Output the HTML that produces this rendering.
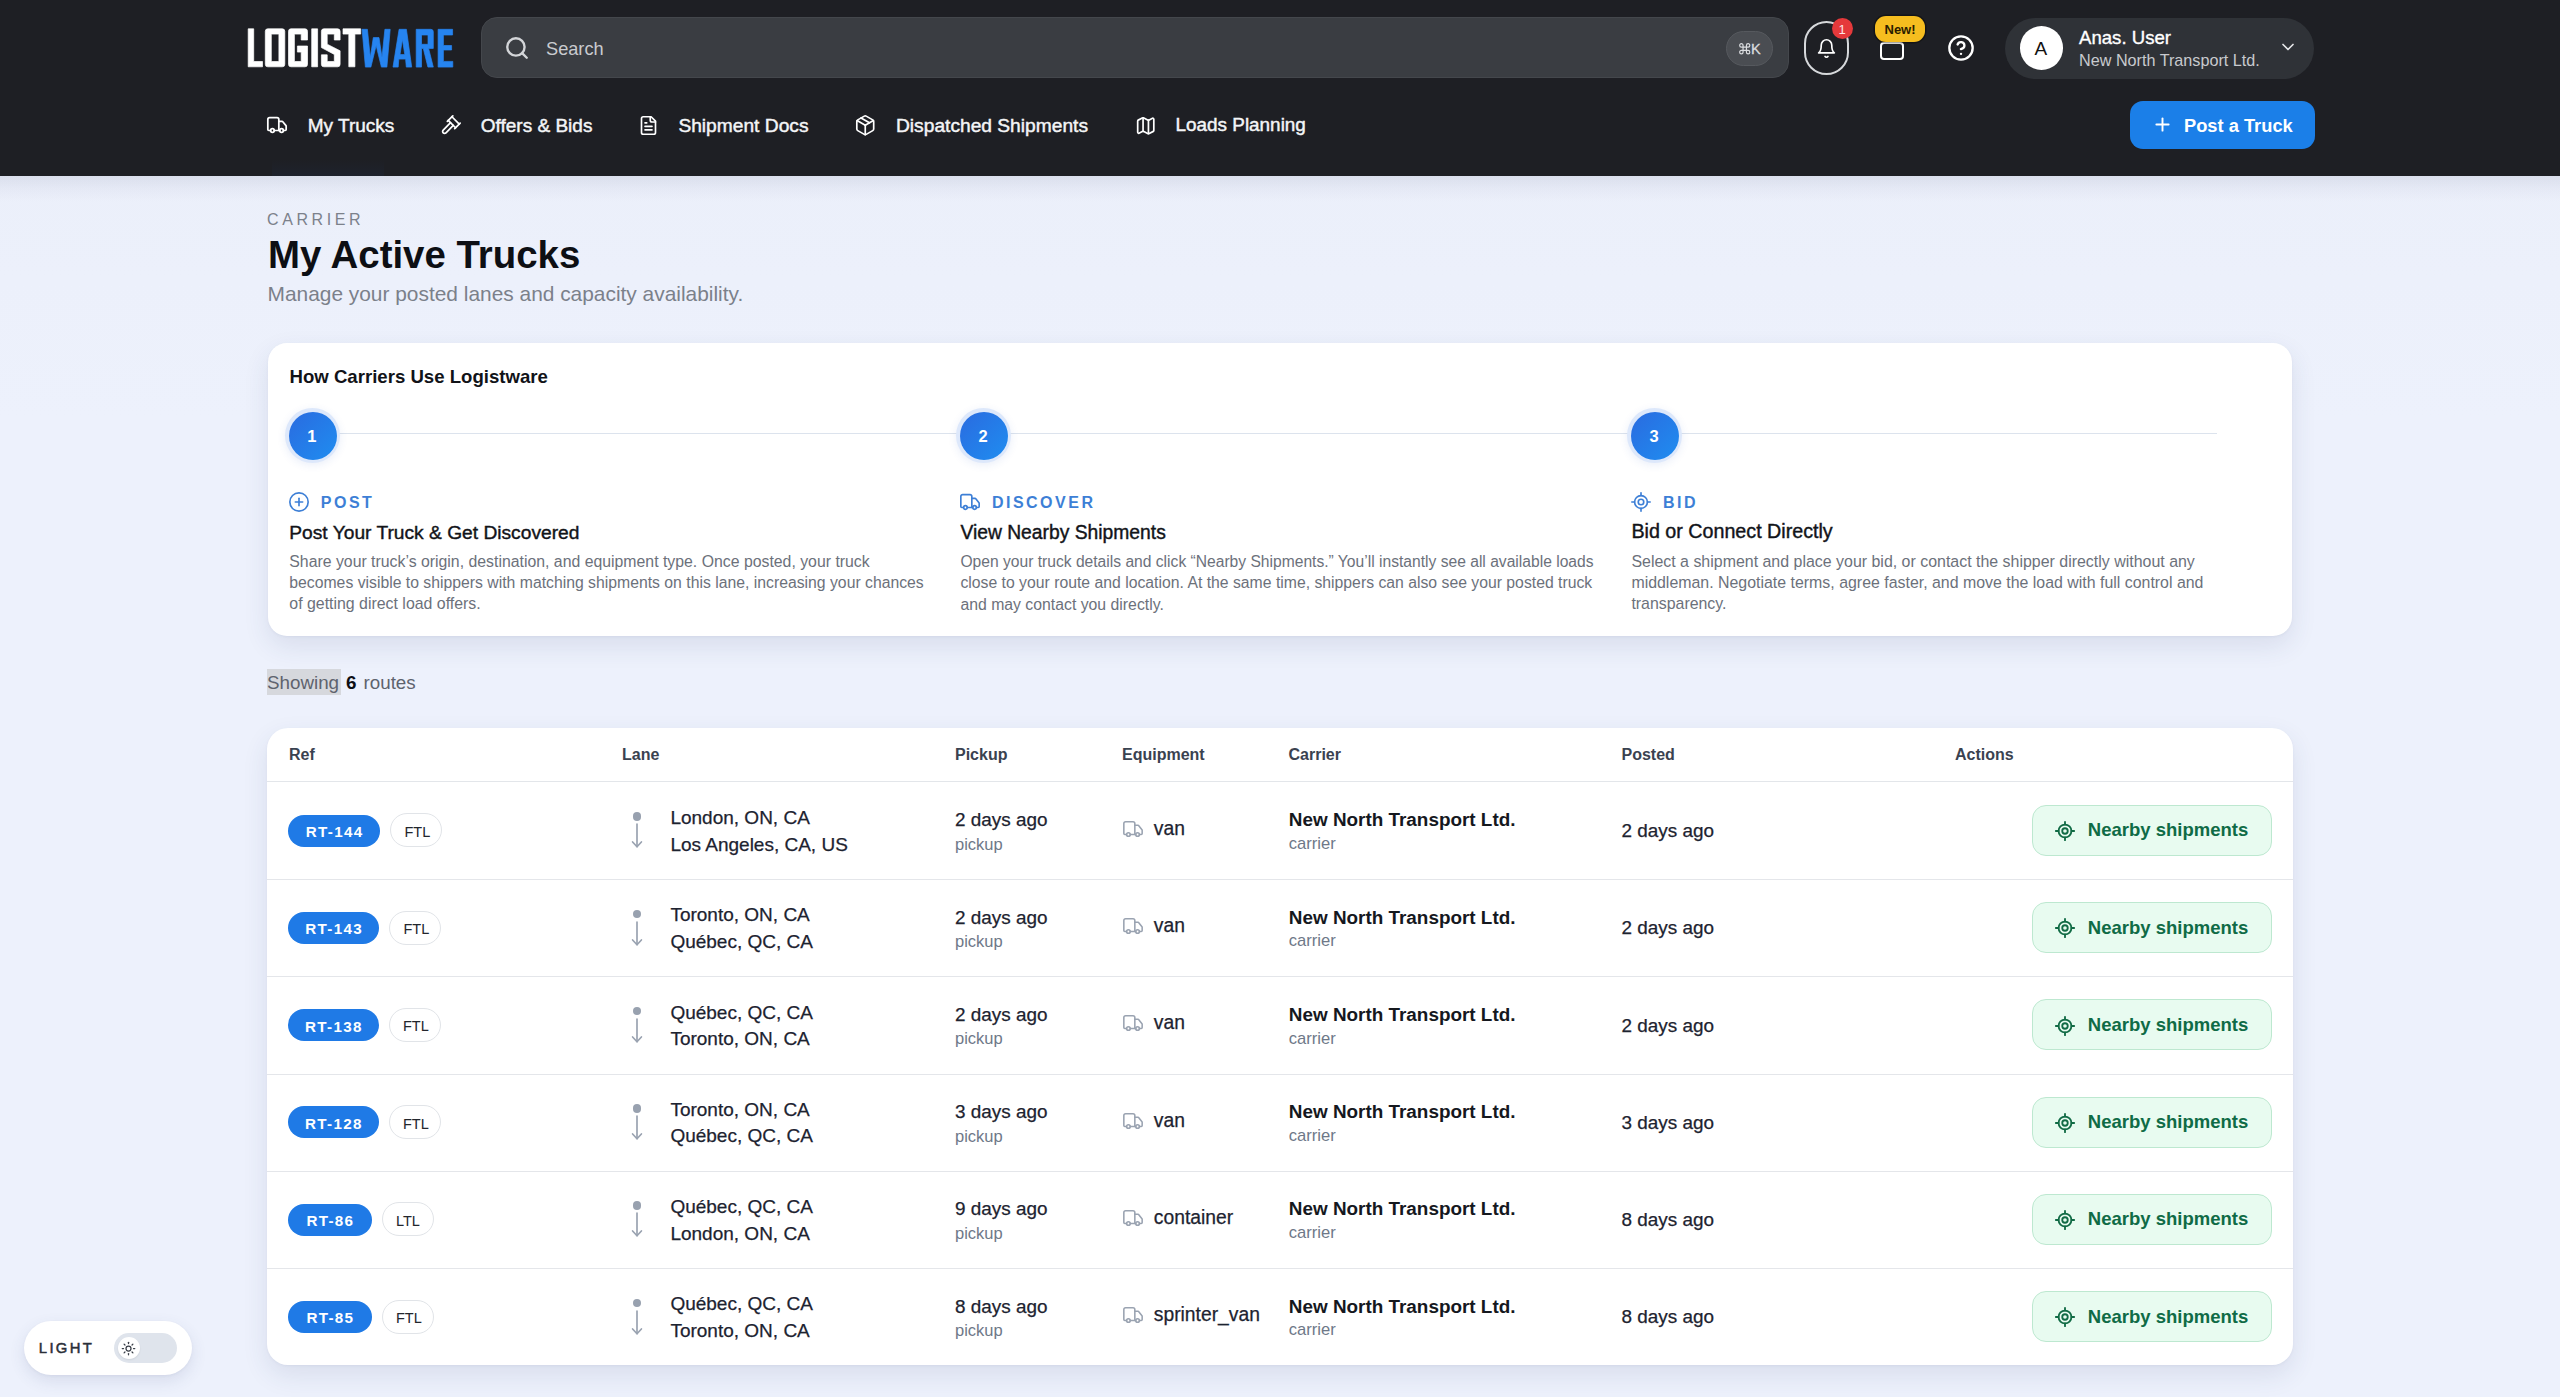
<!DOCTYPE html>
<html><head><meta charset="utf-8"><title>Logistware - My Active Trucks</title>
<style>
html,body{margin:0;padding:0;}
body{width:2560px;height:1397px;overflow:hidden;position:relative;background:#edf1fc;font-family:'Liberation Sans', sans-serif;}
.t{position:absolute;white-space:nowrap;font-family:'Liberation Sans', sans-serif;}
svg{display:block}
</style></head><body>

<div style="position:absolute;left:0.0px;top:0.0px;width:2560.0px;height:1397.0px;background:linear-gradient(180deg,#eaeef9 0%,#edf1fc 30%,#edf1fc 100%);"></div>
<div style="position:absolute;left:0.0px;top:0.0px;width:2560.0px;height:176.0px;background:#1e1f24;"></div>
<div style="position:absolute;left:0.0px;top:176.0px;width:2560.0px;height:26.0px;background:linear-gradient(180deg,rgba(40,50,90,0.085),rgba(40,50,90,0.03) 50%,rgba(40,50,90,0));"></div>
<svg style="position:absolute;left:0;top:0" width="470" height="80" viewBox="0 0 470 80">
<g fill="#ffffff" stroke="#ffffff" stroke-width="0.7" stroke-linejoin="round" fill-rule="evenodd">
<path d="M248.2 28.8H253.7V61.5H262.5V66.8H248.2Z"/>
<path d="M267.8 28.8H282.3Q284.8 28.8 284.8 31.3V64.3Q284.8 66.8 282.3 66.8H267.8Q265.3 66.8 265.3 64.3V31.3Q265.3 28.8 267.8 28.8ZM271.3 34.1V61.5H278.9V34.1Z"/>
<path d="M291 28.8H305Q307.5 28.8 307.5 31.3V40H301.2V34.1H294.4V61.5H301.2V52.1H297.4V46H307.5V64.3Q307.5 66.8 305 66.8H291Q288.5 66.8 288.5 64.3V31.3Q288.5 28.8 291 28.8Z"/>
<path d="M311.7 28.8H317.6V66.8H311.7Z"/>
<path d="M323.9 28.8H337.6Q340.1 28.8 340.1 31.3V40H334.3V34.1H327.2V44.2L340.1 50.8V64.3Q340.1 66.8 337.6 66.8H323.9Q321.4 66.8 321.4 64.3V54.8H327.2V61.5H334.3V54.4L321.4 47.6V31.3Q321.4 28.8 323.9 28.8Z"/>
<path d="M343 28.8H360.7V34.1H354.9V66.8H348.8V34.1H343Z"/>
</g>
<g fill="#2684f0" stroke="#2684f0" stroke-width="0.7" stroke-linejoin="round" fill-rule="evenodd">
<path d="M362.1 29.3H367.4L370.3 57.5L373.3 37.6H379L382 57.5L384.9 29.3H390.2L386.9 67.1H381.4L376.15 45.5L370.9 67.1H365.4Z"/>
<path d="M393 67.1L399.1 29.3H406.4L411.7 67.1H406.3L405.6 59.1H398.8L398.2 67.1ZM400 54.6H404.8L402.4 39.4Z"/>
<path d="M416.2 29.3H430.8Q433.3 29.3 433.3 31.8V48.4H428.6L433.3 67.1H427.9L423.3 48.4H421.5V67.1H416.2ZM421.5 35V44.3H428V35Z"/>
<path d="M438.1 29.3H452.6V35H443.4V45.5H451.6V50H443.4V61.4H452.8V67.1H438.1Z"/>
</g>
</svg>
<div style="position:absolute;left:481.0px;top:17.0px;width:1308.0px;height:61.0px;box-sizing:border-box;background:#3a3d42;border:1px solid #44474c;border-radius:16px;"></div>
<svg style="position:absolute;left:504.0px;top:35.0px;" width="26" height="26" viewBox="0 0 24 24" fill="none" stroke="#d3d5d8" stroke-width="2.2" stroke-linecap="round" stroke-linejoin="round"><circle cx="11" cy="11" r="8"/><path d="m21 21-4.3-4.3"/></svg>
<div class="t " style="left:546.0px;top:39.7px;font-size:18.2px;line-height:18.2px;color:#c9cbcf;">Search</div>
<div style="position:absolute;left:1726.0px;top:30.5px;width:47.0px;height:35.0px;box-sizing:border-box;background:#4a4d52;border:1px solid #56595e;border-radius:18px;"></div>
<svg style="position:absolute;left:1737.5px;top:41.6px;" width="13.5" height="13.5" viewBox="0 0 24 24" fill="none" stroke="#dadcdf" stroke-width="2.1" stroke-linecap="round" stroke-linejoin="round"><path d="M15 6v12a3 3 0 1 0 3-3H6a3 3 0 1 0 3 3V6a3 3 0 1 0-3 3h12a3 3 0 1 0-3-3"/></svg>
<div class="t " style="left:1751.0px;top:41.9px;font-size:14.5px;line-height:14.5px;color:#dadcdf;-webkit-text-stroke:0.3px #dadcdf;">K</div>
<div style="position:absolute;left:1804.0px;top:21.0px;width:45.0px;height:54.0px;box-sizing:border-box;border:2px solid #d6d8db;border-radius:23px;"></div>
<svg style="position:absolute;left:1816.2px;top:38.0px;" width="21" height="21" viewBox="0 0 24 24" fill="none" stroke="#ffffff" stroke-width="1.9" stroke-linecap="round" stroke-linejoin="round"><path d="M6 8a6 6 0 0 1 12 0c0 7 3 9 3 9H3s3-2 3-9"/><path d="M10.3 21a1.94 1.94 0 0 0 3.4 0"/></svg>
<div style="position:absolute;left:1832.0px;top:18.0px;width:21.0px;height:21.0px;background:#e5393b;border-radius:50%;"></div>
<div class="t " style="left:1838.5px;top:23.0px;font-size:13px;line-height:13px;color:#ffe6e6;">1</div>
<div style="position:absolute;left:1880.0px;top:42.0px;width:24.0px;height:18.0px;box-sizing:border-box;border:2.4px solid #fff;border-radius:4px;"></div>
<div style="position:absolute;left:1875.0px;top:16.0px;width:50.0px;height:25.5px;background:#f6bd1f;border-radius:11px;box-shadow:0 0 0 1.5px rgba(0,0,0,0.35);"></div>
<div class="t " style="left:1884.5px;top:22.5px;font-size:13px;line-height:13px;color:#2a1c00;font-weight:700;">New!</div>
<svg style="position:absolute;left:1947.0px;top:34.0px;" width="28" height="28" viewBox="0 0 24 24" fill="none" stroke="#ffffff" stroke-width="2" stroke-linecap="round" stroke-linejoin="round"><circle cx="12" cy="12" r="10"/><path d="M9.09 9a3 3 0 0 1 5.83 1c0 2-3 3-3 3"/><path d="M12 17h.01"/></svg>
<div style="position:absolute;left:2004.5px;top:18.0px;width:309.5px;height:60.5px;background:#2f3237;border-radius:31px;"></div>
<div style="position:absolute;left:2020.0px;top:26.0px;width:43.0px;height:43.5px;background:#ffffff;border-radius:50%;"></div>
<div class="t " style="left:2034.5px;top:39.1px;font-size:19px;line-height:19px;color:#111;">A</div>
<div class="t " style="left:2079.0px;top:29.4px;font-size:18.6px;line-height:18.6px;color:#ffffff;-webkit-text-stroke:0.35px #fff;">Anas. User</div>
<div class="t " style="left:2079.0px;top:52.3px;font-size:16.2px;line-height:16.2px;color:#c8cace;">New North Transport Ltd.</div>
<svg style="position:absolute;left:2278.0px;top:37.0px;" width="20" height="20" viewBox="0 0 24 24" fill="none" stroke="#e6e7e9" stroke-width="2" stroke-linecap="round" stroke-linejoin="round"><path d="m6 9 6 6 6-6"/></svg>
<svg style="position:absolute;left:266.2px;top:114.0px;" width="22" height="22" viewBox="0 0 24 24" fill="none" stroke="#fff" stroke-width="1.9" stroke-linecap="round" stroke-linejoin="round"><path d="M14 18V6a2 2 0 0 0-2-2H4a2 2 0 0 0-2 2v11a1 1 0 0 0 1 1h2"/><path d="M15 18H9"/><path d="M19 18h2a1 1 0 0 0 1-1v-3.65a1 1 0 0 0-.22-.624l-3.48-4.35A1 1 0 0 0 17.52 8H14"/><circle cx="17" cy="18" r="2"/><circle cx="7" cy="18" r="2"/></svg>
<div class="t " style="left:307.8px;top:116.2px;font-size:19px;line-height:19px;color:#f4f5f7;-webkit-text-stroke:0.45px #f4f5f7;">My Trucks</div>
<svg style="position:absolute;left:440.1px;top:114.0px;" width="22" height="22" viewBox="0 0 24 24" fill="none" stroke="#fff" stroke-width="1.9" stroke-linecap="round" stroke-linejoin="round"><path d="m14.5 12.5-8 8a2.119 2.119 0 1 1-3-3l8-8"/><path d="m16 16 6-6"/><path d="m8 8 6-6"/><path d="m9 7 8 8"/><path d="m21 11-8-8"/></svg>
<div class="t " style="left:480.8px;top:116.2px;font-size:19px;line-height:19px;color:#f4f5f7;-webkit-text-stroke:0.45px #f4f5f7;">Offers &amp; Bids</div>
<svg style="position:absolute;left:638.3px;top:114.8px;" width="21" height="21" viewBox="0 0 24 24" fill="none" stroke="#fff" stroke-width="1.9" stroke-linecap="round" stroke-linejoin="round"><path d="M15 2H6a2 2 0 0 0-2 2v16a2 2 0 0 0 2 2h12a2 2 0 0 0 2-2V7Z"/><path d="M14 2v4a2 2 0 0 0 2 2h4"/><path d="M10 9H8"/><path d="M16 13H8"/><path d="M16 17H8"/></svg>
<div class="t " style="left:678.4px;top:116.1px;font-size:19.2px;line-height:19.2px;color:#f4f5f7;-webkit-text-stroke:0.45px #f4f5f7;">Shipment Docs</div>
<svg style="position:absolute;left:854.1px;top:114.0px;" width="22.5" height="22.5" viewBox="0 0 24 24" fill="none" stroke="#fff" stroke-width="1.8" stroke-linecap="round" stroke-linejoin="round"><path d="m7.5 4.27 9 5.15"/><path d="M21 8a2 2 0 0 0-1-1.730l-7-4a2 2 0 0 0-2 0l-7 4A2 2 0 0 0 3 8v8a2 2 0 0 0 1 1.73l7 4a2 2 0 0 0 2 0l7-4A2 2 0 0 0 21 16Z"/><path d="m3.3 7 8.7 5 8.7-5"/><path d="M12 22V12"/></svg>
<div class="t " style="left:896.0px;top:116.1px;font-size:19.2px;line-height:19.2px;color:#f4f5f7;-webkit-text-stroke:0.45px #f4f5f7;">Dispatched Shipments</div>
<svg style="position:absolute;left:1134.5px;top:114.5px;" width="21.5" height="21.5" viewBox="0 0 24 24" fill="none" stroke="#fff" stroke-width="1.9" stroke-linecap="round" stroke-linejoin="round"><path d="M14.106 5.553a2 2 0 0 0 1.788 0l3.659-1.830A1 1 0 0 1 21 4.619v12.764a1 1 0 0 1-.553.894l-4.553 2.277a2 2 0 0 1-1.788 0l-4.212-2.106a2 2 0 0 0-1.788 0l-3.659 1.830A1 1 0 0 1 3 19.381V6.618a1 1 0 0 1 .553-.894l4.553-2.277a2 2 0 0 1 1.788 0z"/><path d="M15 5.764v15"/><path d="M9 3.236v15"/></svg>
<div class="t " style="left:1175.6px;top:116.3px;font-size:18.9px;line-height:18.9px;color:#f4f5f7;-webkit-text-stroke:0.45px #f4f5f7;">Loads Planning</div>
<div style="position:absolute;left:272.0px;top:159.0px;width:112.0px;height:17.0px;background:linear-gradient(180deg,rgba(30,60,120,0),rgba(30,60,120,0.10));"></div>
<div style="position:absolute;left:2130.0px;top:101.0px;width:185.0px;height:48.0px;background:#1b7fe8;border-radius:13px;"></div>
<svg style="position:absolute;left:2151.5px;top:113.5px;" width="21" height="21" viewBox="0 0 24 24" fill="none" stroke="#fff" stroke-width="2.2" stroke-linecap="round" stroke-linejoin="round"><path d="M5 12h14"/><path d="M12 5v14"/></svg>
<div class="t " style="left:2184.0px;top:116.8px;font-size:18.3px;line-height:18.3px;color:#ffffff;font-weight:700;">Post a Truck</div>
<div class="t " style="left:267.0px;top:211.7px;font-size:16px;line-height:16px;color:#7c818b;letter-spacing:3.6px;">CARRIER</div>
<div class="t " style="left:268.0px;top:236.4px;font-size:38.4px;line-height:38.4px;color:#0d0f14;font-weight:700;">My Active Trucks</div>
<div class="t " style="left:267.5px;top:283.5px;font-size:20.9px;line-height:20.9px;color:#7b808a;">Manage your posted lanes and capacity availability.</div>
<div style="position:absolute;left:268.0px;top:342.5px;width:2024.0px;height:293.5px;background:#ffffff;border-radius:19px;box-shadow:0 10px 26px rgba(50,60,110,0.11),0 1px 3px rgba(50,60,110,0.05);"></div>
<div class="t " style="left:289.5px;top:368.3px;font-size:18.6px;line-height:18.6px;color:#111318;font-weight:700;">How Carriers Use Logistware</div>
<div style="position:absolute;left:337.0px;top:432.8px;width:1880.0px;height:1.6px;background:#dce3ed;"></div>
<div style="position:absolute;left:285.3px;top:408.1px;width:55.0px;height:55.0px;background:#dde8fb;border-radius:50%;box-shadow:0 2px 8px rgba(40,90,200,0.10);"></div>
<div style="position:absolute;left:288.8px;top:411.6px;width:48.0px;height:48.0px;background:linear-gradient(135deg,#2a6be0 0%,#1f8df0 100%);border-radius:50%;"></div>
<div class="t " style="left:307.3px;top:428.0px;font-size:16.5px;line-height:16.5px;color:#ffffff;font-weight:700;">1</div>
<div style="position:absolute;left:956.4px;top:408.1px;width:55.0px;height:55.0px;background:#dde8fb;border-radius:50%;box-shadow:0 2px 8px rgba(40,90,200,0.10);"></div>
<div style="position:absolute;left:959.9px;top:411.6px;width:48.0px;height:48.0px;background:linear-gradient(135deg,#2a6be0 0%,#1f8df0 100%);border-radius:50%;"></div>
<div class="t " style="left:978.4px;top:428.0px;font-size:16.5px;line-height:16.5px;color:#ffffff;font-weight:700;">2</div>
<div style="position:absolute;left:1627.4px;top:408.1px;width:55.0px;height:55.0px;background:#dde8fb;border-radius:50%;box-shadow:0 2px 8px rgba(40,90,200,0.10);"></div>
<div style="position:absolute;left:1630.9px;top:411.6px;width:48.0px;height:48.0px;background:linear-gradient(135deg,#2a6be0 0%,#1f8df0 100%);border-radius:50%;"></div>
<div class="t " style="left:1649.4px;top:428.0px;font-size:16.5px;line-height:16.5px;color:#ffffff;font-weight:700;">3</div>
<svg style="position:absolute;left:287.8px;top:490.5px;" width="22" height="22" viewBox="0 0 24 24" fill="none" stroke="#3d7fd6" stroke-width="1.8" stroke-linecap="round" stroke-linejoin="round"><circle cx="12" cy="12" r="10"/><path d="M8 12h8"/><path d="M12 8v8"/></svg>
<div class="t " style="left:320.8px;top:495.2px;font-size:16px;line-height:16px;color:#3d7fd6;font-weight:700;letter-spacing:2.5px;">POST</div>
<div class="t " style="left:289.3px;top:522.8px;font-size:19.2px;line-height:19.2px;color:#121419;-webkit-text-stroke:0.4px #121419;">Post Your Truck &amp; Get Discovered</div>
<div class="t " style="left:289.3px;top:553.8px;font-size:15.83px;line-height:15.83px;color:#6c717b;">Share your truck’s origin, destination, and equipment type. Once posted, your truck</div>
<div class="t " style="left:289.3px;top:575.2px;font-size:15.78px;line-height:15.78px;color:#6c717b;">becomes visible to shippers with matching shipments on this lane, increasing your chances</div>
<div class="t " style="left:289.3px;top:596.4px;font-size:15.9px;line-height:15.9px;color:#6c717b;">of getting direct load offers.</div>
<svg style="position:absolute;left:958.9px;top:490.5px;" width="22" height="22" viewBox="0 0 24 24" fill="none" stroke="#3d7fd6" stroke-width="1.8" stroke-linecap="round" stroke-linejoin="round"><path d="M14 18V6a2 2 0 0 0-2-2H4a2 2 0 0 0-2 2v11a1 1 0 0 0 1 1h2"/><path d="M15 18H9"/><path d="M19 18h2a1 1 0 0 0 1-1v-3.65a1 1 0 0 0-.22-.624l-3.48-4.35A1 1 0 0 0 17.52 8H14"/><circle cx="17" cy="18" r="2"/><circle cx="7" cy="18" r="2"/></svg>
<div class="t " style="left:991.9px;top:495.2px;font-size:16px;line-height:16px;color:#3d7fd6;font-weight:700;letter-spacing:2.5px;">DISCOVER</div>
<div class="t " style="left:960.4px;top:522.7px;font-size:19.3px;line-height:19.3px;color:#121419;-webkit-text-stroke:0.4px #121419;">View Nearby Shipments</div>
<div class="t " style="left:960.4px;top:554.0px;font-size:15.64px;line-height:15.64px;color:#6c717b;">Open your truck details and click “Nearby Shipments.” You’ll instantly see all available loads</div>
<div class="t " style="left:960.4px;top:575.2px;font-size:15.77px;line-height:15.77px;color:#6c717b;">close to your route and location. At the same time, shippers can also see your posted truck</div>
<div class="t " style="left:960.4px;top:596.5px;font-size:15.8px;line-height:15.8px;color:#6c717b;">and may contact you directly.</div>
<svg style="position:absolute;left:1629.9px;top:490.5px;" width="22" height="22" viewBox="0 0 24 24" fill="none" stroke="#3d7fd6" stroke-width="1.8" stroke-linecap="round" stroke-linejoin="round"><line x1="2" x2="5" y1="12" y2="12"/><line x1="19" x2="22" y1="12" y2="12"/><line x1="12" x2="12" y1="2" y2="5"/><line x1="12" x2="12" y1="19" y2="22"/><circle cx="12" cy="12" r="7"/><circle cx="12" cy="12" r="3"/></svg>
<div class="t " style="left:1662.9px;top:495.2px;font-size:16px;line-height:16px;color:#3d7fd6;font-weight:700;letter-spacing:2.5px;">BID</div>
<div class="t " style="left:1631.4px;top:522.4px;font-size:19.7px;line-height:19.7px;color:#121419;-webkit-text-stroke:0.4px #121419;">Bid or Connect Directly</div>
<div class="t " style="left:1631.4px;top:553.8px;font-size:15.94px;line-height:15.94px;color:#6c717b;">Select a shipment and place your bid, or contact the shipper directly without any</div>
<div class="t " style="left:1631.4px;top:575.1px;font-size:15.91px;line-height:15.91px;color:#6c717b;">middleman. Negotiate terms, agree faster, and move the load with full control and</div>
<div class="t " style="left:1631.4px;top:596.4px;font-size:15.9px;line-height:15.9px;color:#6c717b;">transparency.</div>
<div style="position:absolute;left:266.5px;top:669.3px;width:74.5px;height:26.0px;background:#d6d8dd;"></div>
<div class="t " style="left:267.0px;top:673.7px;font-size:18.8px;line-height:18.8px;color:#5e636e;">Showing</div>
<div class="t " style="left:346.0px;top:673.7px;font-size:18.8px;line-height:18.8px;color:#0d0f14;font-weight:700;">6</div>
<div class="t " style="left:363.5px;top:673.7px;font-size:18.8px;line-height:18.8px;color:#5e636e;">routes</div>
<div style="position:absolute;left:266.5px;top:728.0px;width:2026.5px;height:637.0px;background:#ffffff;border-radius:21px;box-shadow:0 10px 26px rgba(50,60,110,0.11),0 1px 3px rgba(50,60,110,0.05);"></div>
<div class="t " style="left:289.0px;top:746.7px;font-size:16px;line-height:16px;color:#3a4250;font-weight:700;">Ref</div>
<div class="t " style="left:622.0px;top:746.7px;font-size:16px;line-height:16px;color:#3a4250;font-weight:700;">Lane</div>
<div class="t " style="left:955.0px;top:746.7px;font-size:16px;line-height:16px;color:#3a4250;font-weight:700;">Pickup</div>
<div class="t " style="left:1122.0px;top:746.7px;font-size:16px;line-height:16px;color:#3a4250;font-weight:700;">Equipment</div>
<div class="t " style="left:1288.5px;top:746.7px;font-size:16px;line-height:16px;color:#3a4250;font-weight:700;">Carrier</div>
<div class="t " style="left:1621.5px;top:746.7px;font-size:16px;line-height:16px;color:#3a4250;font-weight:700;">Posted</div>
<div class="t " style="left:1955.0px;top:746.7px;font-size:16px;line-height:16px;color:#3a4250;font-weight:700;">Actions</div>
<div style="position:absolute;left:266.5px;top:781.0px;width:2026.5px;height:1.3px;background:#e3e6ea;"></div>
<div style="position:absolute;left:288.0px;top:814.6px;width:92.0px;height:32.0px;background:#1f7ae6;border-radius:16px;"></div>
<div class="t" style="left:288px;width:92px;text-align:center;top:824.1px;font-size:15.2px;line-height:15.2px;color:#fff;font-weight:700;letter-spacing:1.3px;text-indent:1.3px">RT-144</div>
<div style="position:absolute;left:390.0px;top:813.4px;width:52.0px;height:34.0px;box-sizing:border-box;background:#fff;border:1.2px solid #e1e4e8;border-radius:17px;"></div>
<div class="t " style="left:404.5px;top:824.9px;font-size:14.5px;line-height:14.5px;color:#23262d;">FTL</div>
<div style="position:absolute;left:632.9px;top:812.4px;width:8.6px;height:8.6px;background:#98a1af;border-radius:50%;"></div>
<svg style="position:absolute;left:630.2px;top:823.4px;" width="14" height="26" viewBox="0 0 14 26" fill="none" stroke="#9aa3b1" stroke-width="1.7" stroke-linecap="round" stroke-linejoin="round"><path d="M7 1v22.5"/><path d="m2.6 19 4.4 4.8 4.4-4.8"/></svg>
<div class="t " style="left:670.4px;top:808.1px;font-size:19px;line-height:19px;color:#1d2330;-webkit-text-stroke:0.25px #1d2330;">London, ON, CA</div>
<div class="t " style="left:670.4px;top:834.5px;font-size:19px;line-height:19px;color:#1d2330;-webkit-text-stroke:0.25px #1d2330;">Los Angeles, CA, US</div>
<div class="t " style="left:955.0px;top:811.2px;font-size:18.9px;line-height:18.9px;color:#1d2330;-webkit-text-stroke:0.25px #1d2330;">2 days ago</div>
<div class="t " style="left:955.0px;top:835.9px;font-size:16.5px;line-height:16.5px;color:#6e7888;">pickup</div>
<svg style="position:absolute;left:1121.5px;top:817.9px;" width="22" height="22" viewBox="0 0 24 24" fill="none" stroke="#9aa3b1" stroke-width="1.7" stroke-linecap="round" stroke-linejoin="round"><path d="M14 18V6a2 2 0 0 0-2-2H4a2 2 0 0 0-2 2v11a1 1 0 0 0 1 1h2"/><path d="M15 18H9"/><path d="M19 18h2a1 1 0 0 0 1-1v-3.65a1 1 0 0 0-.22-.624l-3.48-4.35A1 1 0 0 0 17.52 8H14"/><circle cx="17" cy="18" r="2"/><circle cx="7" cy="18" r="2"/></svg>
<div class="t " style="left:1153.8px;top:818.8px;font-size:19.3px;line-height:19.3px;color:#1d2330;-webkit-text-stroke:0.25px #1d2330;">van</div>
<div class="t " style="left:1288.8px;top:811.2px;font-size:18.9px;line-height:18.9px;color:#15181e;font-weight:700;">New North Transport Ltd.</div>
<div class="t " style="left:1288.8px;top:836.2px;font-size:16.6px;line-height:16.6px;color:#6e7888;">carrier</div>
<div class="t " style="left:1621.5px;top:822.1px;font-size:18.9px;line-height:18.9px;color:#1d2330;-webkit-text-stroke:0.25px #1d2330;">2 days ago</div>
<div style="position:absolute;left:2032.0px;top:804.8px;width:240.0px;height:51.0px;box-sizing:border-box;background:#e8fbf0;border:1.3px solid #bde8d0;border-radius:14px;"></div>
<svg style="position:absolute;left:2054.0px;top:820.0px;" width="22" height="22" viewBox="0 0 24 24" fill="none" stroke="#116b45" stroke-width="2" stroke-linecap="round" stroke-linejoin="round"><line x1="2" x2="5" y1="12" y2="12"/><line x1="19" x2="22" y1="12" y2="12"/><line x1="12" x2="12" y1="2" y2="5"/><line x1="12" x2="12" y1="19" y2="22"/><circle cx="12" cy="12" r="7"/><circle cx="12" cy="12" r="3"/></svg>
<div class="t " style="left:2087.8px;top:821.4px;font-size:18.5px;line-height:18.5px;color:#0f6b46;font-weight:700;">Nearby shipments</div>
<div style="position:absolute;left:266.5px;top:879.0px;width:2026.5px;height:1.1px;background:#e4e6ea;"></div>
<div style="position:absolute;left:288.0px;top:911.9px;width:91.0px;height:32.0px;background:#1f7ae6;border-radius:16px;"></div>
<div class="t" style="left:288px;width:91px;text-align:center;top:921.3px;font-size:15.2px;line-height:15.2px;color:#fff;font-weight:700;letter-spacing:1.3px;text-indent:1.3px">RT-143</div>
<div style="position:absolute;left:389.0px;top:910.6px;width:52.0px;height:34.0px;box-sizing:border-box;background:#fff;border:1.2px solid #e1e4e8;border-radius:17px;"></div>
<div class="t " style="left:403.5px;top:922.1px;font-size:14.5px;line-height:14.5px;color:#23262d;">FTL</div>
<div style="position:absolute;left:632.9px;top:909.6px;width:8.6px;height:8.6px;background:#98a1af;border-radius:50%;"></div>
<svg style="position:absolute;left:630.2px;top:920.6px;" width="14" height="26" viewBox="0 0 14 26" fill="none" stroke="#9aa3b1" stroke-width="1.7" stroke-linecap="round" stroke-linejoin="round"><path d="M7 1v22.5"/><path d="m2.6 19 4.4 4.8 4.4-4.8"/></svg>
<div class="t " style="left:670.4px;top:905.4px;font-size:19px;line-height:19px;color:#1d2330;-webkit-text-stroke:0.25px #1d2330;">Toronto, ON, CA</div>
<div class="t " style="left:670.4px;top:931.8px;font-size:19px;line-height:19px;color:#1d2330;-webkit-text-stroke:0.25px #1d2330;">Québec, QC, CA</div>
<div class="t " style="left:955.0px;top:908.5px;font-size:18.9px;line-height:18.9px;color:#1d2330;-webkit-text-stroke:0.25px #1d2330;">2 days ago</div>
<div class="t " style="left:955.0px;top:933.1px;font-size:16.5px;line-height:16.5px;color:#6e7888;">pickup</div>
<svg style="position:absolute;left:1121.5px;top:915.1px;" width="22" height="22" viewBox="0 0 24 24" fill="none" stroke="#9aa3b1" stroke-width="1.7" stroke-linecap="round" stroke-linejoin="round"><path d="M14 18V6a2 2 0 0 0-2-2H4a2 2 0 0 0-2 2v11a1 1 0 0 0 1 1h2"/><path d="M15 18H9"/><path d="M19 18h2a1 1 0 0 0 1-1v-3.65a1 1 0 0 0-.22-.624l-3.48-4.35A1 1 0 0 0 17.52 8H14"/><circle cx="17" cy="18" r="2"/><circle cx="7" cy="18" r="2"/></svg>
<div class="t " style="left:1153.8px;top:916.0px;font-size:19.3px;line-height:19.3px;color:#1d2330;-webkit-text-stroke:0.25px #1d2330;">van</div>
<div class="t " style="left:1288.8px;top:908.5px;font-size:18.9px;line-height:18.9px;color:#15181e;font-weight:700;">New North Transport Ltd.</div>
<div class="t " style="left:1288.8px;top:933.4px;font-size:16.6px;line-height:16.6px;color:#6e7888;">carrier</div>
<div class="t " style="left:1621.5px;top:919.4px;font-size:18.9px;line-height:18.9px;color:#1d2330;-webkit-text-stroke:0.25px #1d2330;">2 days ago</div>
<div style="position:absolute;left:2032.0px;top:902.0px;width:240.0px;height:51.0px;box-sizing:border-box;background:#e8fbf0;border:1.3px solid #bde8d0;border-radius:14px;"></div>
<svg style="position:absolute;left:2054.0px;top:917.2px;" width="22" height="22" viewBox="0 0 24 24" fill="none" stroke="#116b45" stroke-width="2" stroke-linecap="round" stroke-linejoin="round"><line x1="2" x2="5" y1="12" y2="12"/><line x1="19" x2="22" y1="12" y2="12"/><line x1="12" x2="12" y1="2" y2="5"/><line x1="12" x2="12" y1="19" y2="22"/><circle cx="12" cy="12" r="7"/><circle cx="12" cy="12" r="3"/></svg>
<div class="t " style="left:2087.8px;top:918.6px;font-size:18.5px;line-height:18.5px;color:#0f6b46;font-weight:700;">Nearby shipments</div>
<div style="position:absolute;left:266.5px;top:976.2px;width:2026.5px;height:1.1px;background:#e4e6ea;"></div>
<div style="position:absolute;left:288.0px;top:1009.1px;width:90.5px;height:32.0px;background:#1f7ae6;border-radius:16px;"></div>
<div class="t" style="left:288px;width:90.5px;text-align:center;top:1018.6px;font-size:15.2px;line-height:15.2px;color:#fff;font-weight:700;letter-spacing:1.3px;text-indent:1.3px">RT-138</div>
<div style="position:absolute;left:388.5px;top:1007.9px;width:52.0px;height:34.0px;box-sizing:border-box;background:#fff;border:1.2px solid #e1e4e8;border-radius:17px;"></div>
<div class="t " style="left:403.0px;top:1019.4px;font-size:14.5px;line-height:14.5px;color:#23262d;">FTL</div>
<div style="position:absolute;left:632.9px;top:1006.9px;width:8.6px;height:8.6px;background:#98a1af;border-radius:50%;"></div>
<svg style="position:absolute;left:630.2px;top:1017.9px;" width="14" height="26" viewBox="0 0 14 26" fill="none" stroke="#9aa3b1" stroke-width="1.7" stroke-linecap="round" stroke-linejoin="round"><path d="M7 1v22.5"/><path d="m2.6 19 4.4 4.8 4.4-4.8"/></svg>
<div class="t " style="left:670.4px;top:1002.6px;font-size:19px;line-height:19px;color:#1d2330;-webkit-text-stroke:0.25px #1d2330;">Québec, QC, CA</div>
<div class="t " style="left:670.4px;top:1029.0px;font-size:19px;line-height:19px;color:#1d2330;-webkit-text-stroke:0.25px #1d2330;">Toronto, ON, CA</div>
<div class="t " style="left:955.0px;top:1005.7px;font-size:18.9px;line-height:18.9px;color:#1d2330;-webkit-text-stroke:0.25px #1d2330;">2 days ago</div>
<div class="t " style="left:955.0px;top:1030.4px;font-size:16.5px;line-height:16.5px;color:#6e7888;">pickup</div>
<svg style="position:absolute;left:1121.5px;top:1012.4px;" width="22" height="22" viewBox="0 0 24 24" fill="none" stroke="#9aa3b1" stroke-width="1.7" stroke-linecap="round" stroke-linejoin="round"><path d="M14 18V6a2 2 0 0 0-2-2H4a2 2 0 0 0-2 2v11a1 1 0 0 0 1 1h2"/><path d="M15 18H9"/><path d="M19 18h2a1 1 0 0 0 1-1v-3.65a1 1 0 0 0-.22-.624l-3.48-4.35A1 1 0 0 0 17.52 8H14"/><circle cx="17" cy="18" r="2"/><circle cx="7" cy="18" r="2"/></svg>
<div class="t " style="left:1153.8px;top:1013.3px;font-size:19.3px;line-height:19.3px;color:#1d2330;-webkit-text-stroke:0.25px #1d2330;">van</div>
<div class="t " style="left:1288.8px;top:1005.7px;font-size:18.9px;line-height:18.9px;color:#15181e;font-weight:700;">New North Transport Ltd.</div>
<div class="t " style="left:1288.8px;top:1030.7px;font-size:16.6px;line-height:16.6px;color:#6e7888;">carrier</div>
<div class="t " style="left:1621.5px;top:1016.6px;font-size:18.9px;line-height:18.9px;color:#1d2330;-webkit-text-stroke:0.25px #1d2330;">2 days ago</div>
<div style="position:absolute;left:2032.0px;top:999.3px;width:240.0px;height:51.0px;box-sizing:border-box;background:#e8fbf0;border:1.3px solid #bde8d0;border-radius:14px;"></div>
<svg style="position:absolute;left:2054.0px;top:1014.5px;" width="22" height="22" viewBox="0 0 24 24" fill="none" stroke="#116b45" stroke-width="2" stroke-linecap="round" stroke-linejoin="round"><line x1="2" x2="5" y1="12" y2="12"/><line x1="19" x2="22" y1="12" y2="12"/><line x1="12" x2="12" y1="2" y2="5"/><line x1="12" x2="12" y1="19" y2="22"/><circle cx="12" cy="12" r="7"/><circle cx="12" cy="12" r="3"/></svg>
<div class="t " style="left:2087.8px;top:1015.9px;font-size:18.5px;line-height:18.5px;color:#0f6b46;font-weight:700;">Nearby shipments</div>
<div style="position:absolute;left:266.5px;top:1073.5px;width:2026.5px;height:1.1px;background:#e4e6ea;"></div>
<div style="position:absolute;left:288.0px;top:1106.4px;width:90.5px;height:32.0px;background:#1f7ae6;border-radius:16px;"></div>
<div class="t" style="left:288px;width:90.5px;text-align:center;top:1115.8px;font-size:15.2px;line-height:15.2px;color:#fff;font-weight:700;letter-spacing:1.3px;text-indent:1.3px">RT-128</div>
<div style="position:absolute;left:388.5px;top:1105.2px;width:52.0px;height:34.0px;box-sizing:border-box;background:#fff;border:1.2px solid #e1e4e8;border-radius:17px;"></div>
<div class="t " style="left:403.0px;top:1116.6px;font-size:14.5px;line-height:14.5px;color:#23262d;">FTL</div>
<div style="position:absolute;left:632.9px;top:1104.2px;width:8.6px;height:8.6px;background:#98a1af;border-radius:50%;"></div>
<svg style="position:absolute;left:630.2px;top:1115.2px;" width="14" height="26" viewBox="0 0 14 26" fill="none" stroke="#9aa3b1" stroke-width="1.7" stroke-linecap="round" stroke-linejoin="round"><path d="M7 1v22.5"/><path d="m2.6 19 4.4 4.8 4.4-4.8"/></svg>
<div class="t " style="left:670.4px;top:1099.9px;font-size:19px;line-height:19px;color:#1d2330;-webkit-text-stroke:0.25px #1d2330;">Toronto, ON, CA</div>
<div class="t " style="left:670.4px;top:1126.3px;font-size:19px;line-height:19px;color:#1d2330;-webkit-text-stroke:0.25px #1d2330;">Québec, QC, CA</div>
<div class="t " style="left:955.0px;top:1103.0px;font-size:18.9px;line-height:18.9px;color:#1d2330;-webkit-text-stroke:0.25px #1d2330;">3 days ago</div>
<div class="t " style="left:955.0px;top:1127.6px;font-size:16.5px;line-height:16.5px;color:#6e7888;">pickup</div>
<svg style="position:absolute;left:1121.5px;top:1109.7px;" width="22" height="22" viewBox="0 0 24 24" fill="none" stroke="#9aa3b1" stroke-width="1.7" stroke-linecap="round" stroke-linejoin="round"><path d="M14 18V6a2 2 0 0 0-2-2H4a2 2 0 0 0-2 2v11a1 1 0 0 0 1 1h2"/><path d="M15 18H9"/><path d="M19 18h2a1 1 0 0 0 1-1v-3.65a1 1 0 0 0-.22-.624l-3.48-4.35A1 1 0 0 0 17.52 8H14"/><circle cx="17" cy="18" r="2"/><circle cx="7" cy="18" r="2"/></svg>
<div class="t " style="left:1153.8px;top:1110.5px;font-size:19.3px;line-height:19.3px;color:#1d2330;-webkit-text-stroke:0.25px #1d2330;">van</div>
<div class="t " style="left:1288.8px;top:1103.0px;font-size:18.9px;line-height:18.9px;color:#15181e;font-weight:700;">New North Transport Ltd.</div>
<div class="t " style="left:1288.8px;top:1127.9px;font-size:16.6px;line-height:16.6px;color:#6e7888;">carrier</div>
<div class="t " style="left:1621.5px;top:1113.9px;font-size:18.9px;line-height:18.9px;color:#1d2330;-webkit-text-stroke:0.25px #1d2330;">3 days ago</div>
<div style="position:absolute;left:2032.0px;top:1096.6px;width:240.0px;height:51.0px;box-sizing:border-box;background:#e8fbf0;border:1.3px solid #bde8d0;border-radius:14px;"></div>
<svg style="position:absolute;left:2054.0px;top:1111.8px;" width="22" height="22" viewBox="0 0 24 24" fill="none" stroke="#116b45" stroke-width="2" stroke-linecap="round" stroke-linejoin="round"><line x1="2" x2="5" y1="12" y2="12"/><line x1="19" x2="22" y1="12" y2="12"/><line x1="12" x2="12" y1="2" y2="5"/><line x1="12" x2="12" y1="19" y2="22"/><circle cx="12" cy="12" r="7"/><circle cx="12" cy="12" r="3"/></svg>
<div class="t " style="left:2087.8px;top:1113.1px;font-size:18.5px;line-height:18.5px;color:#0f6b46;font-weight:700;">Nearby shipments</div>
<div style="position:absolute;left:266.5px;top:1170.8px;width:2026.5px;height:1.1px;background:#e4e6ea;"></div>
<div style="position:absolute;left:288.0px;top:1203.6px;width:83.5px;height:32.0px;background:#1f7ae6;border-radius:16px;"></div>
<div class="t" style="left:288px;width:83.5px;text-align:center;top:1213.1px;font-size:15.2px;line-height:15.2px;color:#fff;font-weight:700;letter-spacing:1.3px;text-indent:1.3px">RT-86</div>
<div style="position:absolute;left:381.5px;top:1202.4px;width:52.0px;height:34.0px;box-sizing:border-box;background:#fff;border:1.2px solid #e1e4e8;border-radius:17px;"></div>
<div class="t " style="left:396.0px;top:1213.9px;font-size:14.5px;line-height:14.5px;color:#23262d;">LTL</div>
<div style="position:absolute;left:632.9px;top:1201.4px;width:8.6px;height:8.6px;background:#98a1af;border-radius:50%;"></div>
<svg style="position:absolute;left:630.2px;top:1212.4px;" width="14" height="26" viewBox="0 0 14 26" fill="none" stroke="#9aa3b1" stroke-width="1.7" stroke-linecap="round" stroke-linejoin="round"><path d="M7 1v22.5"/><path d="m2.6 19 4.4 4.8 4.4-4.8"/></svg>
<div class="t " style="left:670.4px;top:1197.2px;font-size:19px;line-height:19px;color:#1d2330;-webkit-text-stroke:0.25px #1d2330;">Québec, QC, CA</div>
<div class="t " style="left:670.4px;top:1223.5px;font-size:19px;line-height:19px;color:#1d2330;-webkit-text-stroke:0.25px #1d2330;">London, ON, CA</div>
<div class="t " style="left:955.0px;top:1200.2px;font-size:18.9px;line-height:18.9px;color:#1d2330;-webkit-text-stroke:0.25px #1d2330;">9 days ago</div>
<div class="t " style="left:955.0px;top:1224.9px;font-size:16.5px;line-height:16.5px;color:#6e7888;">pickup</div>
<svg style="position:absolute;left:1121.5px;top:1206.9px;" width="22" height="22" viewBox="0 0 24 24" fill="none" stroke="#9aa3b1" stroke-width="1.7" stroke-linecap="round" stroke-linejoin="round"><path d="M14 18V6a2 2 0 0 0-2-2H4a2 2 0 0 0-2 2v11a1 1 0 0 0 1 1h2"/><path d="M15 18H9"/><path d="M19 18h2a1 1 0 0 0 1-1v-3.65a1 1 0 0 0-.22-.624l-3.48-4.35A1 1 0 0 0 17.52 8H14"/><circle cx="17" cy="18" r="2"/><circle cx="7" cy="18" r="2"/></svg>
<div class="t " style="left:1153.8px;top:1207.8px;font-size:19.3px;line-height:19.3px;color:#1d2330;-webkit-text-stroke:0.25px #1d2330;">container</div>
<div class="t " style="left:1288.8px;top:1200.2px;font-size:18.9px;line-height:18.9px;color:#15181e;font-weight:700;">New North Transport Ltd.</div>
<div class="t " style="left:1288.8px;top:1225.2px;font-size:16.6px;line-height:16.6px;color:#6e7888;">carrier</div>
<div class="t " style="left:1621.5px;top:1211.1px;font-size:18.9px;line-height:18.9px;color:#1d2330;-webkit-text-stroke:0.25px #1d2330;">8 days ago</div>
<div style="position:absolute;left:2032.0px;top:1193.8px;width:240.0px;height:51.0px;box-sizing:border-box;background:#e8fbf0;border:1.3px solid #bde8d0;border-radius:14px;"></div>
<svg style="position:absolute;left:2054.0px;top:1209.0px;" width="22" height="22" viewBox="0 0 24 24" fill="none" stroke="#116b45" stroke-width="2" stroke-linecap="round" stroke-linejoin="round"><line x1="2" x2="5" y1="12" y2="12"/><line x1="19" x2="22" y1="12" y2="12"/><line x1="12" x2="12" y1="2" y2="5"/><line x1="12" x2="12" y1="19" y2="22"/><circle cx="12" cy="12" r="7"/><circle cx="12" cy="12" r="3"/></svg>
<div class="t " style="left:2087.8px;top:1210.4px;font-size:18.5px;line-height:18.5px;color:#0f6b46;font-weight:700;">Nearby shipments</div>
<div style="position:absolute;left:266.5px;top:1268.0px;width:2026.5px;height:1.1px;background:#e4e6ea;"></div>
<div style="position:absolute;left:288.0px;top:1300.9px;width:83.5px;height:32.0px;background:#1f7ae6;border-radius:16px;"></div>
<div class="t" style="left:288px;width:83.5px;text-align:center;top:1310.3px;font-size:15.2px;line-height:15.2px;color:#fff;font-weight:700;letter-spacing:1.3px;text-indent:1.3px">RT-85</div>
<div style="position:absolute;left:381.5px;top:1299.7px;width:52.0px;height:34.0px;box-sizing:border-box;background:#fff;border:1.2px solid #e1e4e8;border-radius:17px;"></div>
<div class="t " style="left:396.0px;top:1311.1px;font-size:14.5px;line-height:14.5px;color:#23262d;">FTL</div>
<div style="position:absolute;left:632.9px;top:1298.7px;width:8.6px;height:8.6px;background:#98a1af;border-radius:50%;"></div>
<svg style="position:absolute;left:630.2px;top:1309.7px;" width="14" height="26" viewBox="0 0 14 26" fill="none" stroke="#9aa3b1" stroke-width="1.7" stroke-linecap="round" stroke-linejoin="round"><path d="M7 1v22.5"/><path d="m2.6 19 4.4 4.8 4.4-4.8"/></svg>
<div class="t " style="left:670.4px;top:1294.4px;font-size:19px;line-height:19px;color:#1d2330;-webkit-text-stroke:0.25px #1d2330;">Québec, QC, CA</div>
<div class="t " style="left:670.4px;top:1320.8px;font-size:19px;line-height:19px;color:#1d2330;-webkit-text-stroke:0.25px #1d2330;">Toronto, ON, CA</div>
<div class="t " style="left:955.0px;top:1297.5px;font-size:18.9px;line-height:18.9px;color:#1d2330;-webkit-text-stroke:0.25px #1d2330;">8 days ago</div>
<div class="t " style="left:955.0px;top:1322.1px;font-size:16.5px;line-height:16.5px;color:#6e7888;">pickup</div>
<svg style="position:absolute;left:1121.5px;top:1304.2px;" width="22" height="22" viewBox="0 0 24 24" fill="none" stroke="#9aa3b1" stroke-width="1.7" stroke-linecap="round" stroke-linejoin="round"><path d="M14 18V6a2 2 0 0 0-2-2H4a2 2 0 0 0-2 2v11a1 1 0 0 0 1 1h2"/><path d="M15 18H9"/><path d="M19 18h2a1 1 0 0 0 1-1v-3.65a1 1 0 0 0-.22-.624l-3.48-4.35A1 1 0 0 0 17.52 8H14"/><circle cx="17" cy="18" r="2"/><circle cx="7" cy="18" r="2"/></svg>
<div class="t " style="left:1153.8px;top:1305.0px;font-size:19.3px;line-height:19.3px;color:#1d2330;-webkit-text-stroke:0.25px #1d2330;">sprinter_van</div>
<div class="t " style="left:1288.8px;top:1297.5px;font-size:18.9px;line-height:18.9px;color:#15181e;font-weight:700;">New North Transport Ltd.</div>
<div class="t " style="left:1288.8px;top:1322.4px;font-size:16.6px;line-height:16.6px;color:#6e7888;">carrier</div>
<div class="t " style="left:1621.5px;top:1308.4px;font-size:18.9px;line-height:18.9px;color:#1d2330;-webkit-text-stroke:0.25px #1d2330;">8 days ago</div>
<div style="position:absolute;left:2032.0px;top:1291.1px;width:240.0px;height:51.0px;box-sizing:border-box;background:#e8fbf0;border:1.3px solid #bde8d0;border-radius:14px;"></div>
<svg style="position:absolute;left:2054.0px;top:1306.2px;" width="22" height="22" viewBox="0 0 24 24" fill="none" stroke="#116b45" stroke-width="2" stroke-linecap="round" stroke-linejoin="round"><line x1="2" x2="5" y1="12" y2="12"/><line x1="19" x2="22" y1="12" y2="12"/><line x1="12" x2="12" y1="2" y2="5"/><line x1="12" x2="12" y1="19" y2="22"/><circle cx="12" cy="12" r="7"/><circle cx="12" cy="12" r="3"/></svg>
<div class="t " style="left:2087.8px;top:1307.6px;font-size:18.5px;line-height:18.5px;color:#0f6b46;font-weight:700;">Nearby shipments</div>
<div style="position:absolute;left:23.5px;top:1321.0px;width:168.5px;height:54.0px;background:#ffffff;border-radius:27px;box-shadow:0 6px 16px rgba(60,70,120,0.12),0 1px 3px rgba(60,70,120,0.06);"></div>
<div class="t " style="left:38.8px;top:1340.9px;font-size:14.8px;line-height:14.8px;color:#2a2f38;letter-spacing:2.35px;-webkit-text-stroke:0.5px #2a2f38;">LIGHT</div>
<div style="position:absolute;left:113.5px;top:1332.7px;width:63.0px;height:30.3px;background:#dfe4ec;border-radius:16px;"></div>
<div style="position:absolute;left:117.5px;top:1337.0px;width:22.0px;height:22.0px;background:#ffffff;border-radius:50%;box-shadow:0 1px 2px rgba(0,0,0,0.08);"></div>
<svg style="position:absolute;left:121.0px;top:1340.5px;" width="15" height="15" viewBox="0 0 24 24" fill="none" stroke="#3a3f48" stroke-width="2" stroke-linecap="round" stroke-linejoin="round"><circle cx="12" cy="12" r="4"/><path d="M12 2v2"/><path d="M12 20v2"/><path d="m4.93 4.93 1.41 1.41"/><path d="m17.66 17.66 1.41 1.41"/><path d="M2 12h2"/><path d="M20 12h2"/><path d="m6.34 17.66-1.41 1.41"/><path d="m19.07 4.93-1.41 1.41"/></svg>
</body></html>
